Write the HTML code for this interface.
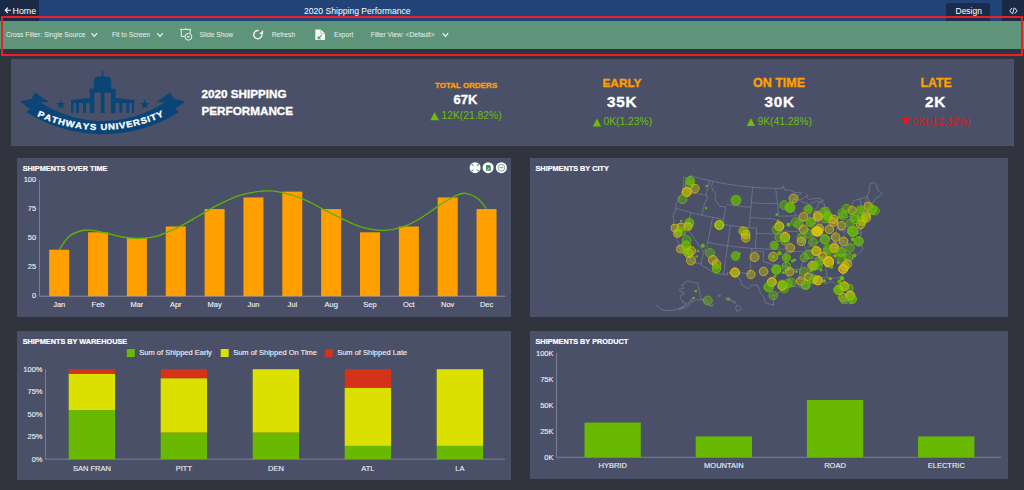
<!DOCTYPE html>
<html><head><meta charset="utf-8"><style>
*{margin:0;padding:0;box-sizing:border-box}
html,body{width:1024px;height:490px;overflow:hidden;background:#31333f;font-family:'Liberation Sans',sans-serif;}
.a{position:absolute;white-space:nowrap}
.panel{position:absolute;background:#4a5068}
.tb{position:absolute;top:30px;font-size:6.7px;color:#eef2ee;line-height:10px}
.ttl{position:absolute;font-size:7.3px;font-weight:bold;color:#fff;line-height:8px;-webkit-text-stroke:0.2px #fff}
svg text{font-family:'Liberation Sans',sans-serif;}
.ax{font-size:7.5px;fill:#eef0f4;stroke:#eef0f4;stroke-width:0.12px}
.hb{-webkit-text-stroke:0.35px currentColor}
</style></head><body>
<!-- top bar -->
<div class="a" style="left:0;top:0;width:1024px;height:21px;background:#214377"></div>
<div class="a" style="left:0;top:0;width:39px;height:21px;background:#1a2946"></div>
<div class="a" style="left:12.5px;top:4.7px;font-size:8.9px;color:#fff;line-height:12px">Home</div>
<svg class="a" style="left:0;top:0" width="14" height="20"><path d="M5.2,10.3 H10.9 M7.9,7.6 L5.3,10.3 L7.9,13" fill="none" stroke="#fff" stroke-width="1.1"/></svg>
<div class="a" style="left:304px;top:4.5px;font-size:8.6px;color:#fff;line-height:12px">2020 Shipping Performance</div>
<div class="a" style="left:946px;top:3px;width:44px;height:18px;border-radius:3px 3px 0 0;background:#1b2b4a"></div>
<div class="a" style="left:955.5px;top:4.7px;font-size:8.5px;color:#fff;line-height:12px">Design</div>
<div class="a" style="left:1002px;top:0;width:22px;height:21px;background:#1a2946"></div>
<svg class="a" style="left:1000px;top:0" width="24" height="20"><path d="M12,8 L9.8,10.8 L12,13.6 M14.8,8 L17,10.8 L14.8,13.6 M14.2,7.6 L12.6,14" fill="none" stroke="#fff" stroke-width="0.9"/></svg>
<!-- toolbar -->
<div class="a" style="left:0;top:21px;width:1024px;height:28px;background:#5e9479"></div>
<div class="tb" style="left:6px">Cross Filter: Single Source</div>
<div class="tb" style="left:112px">Fit to Screen</div>
<div class="tb" style="left:199.5px">Slide Show</div>
<div class="tb" style="left:271.7px">Refresh</div>
<div class="tb" style="left:334px">Export</div>
<div class="tb" style="left:370.8px">Filter View: &lt;Default&gt;</div>
<svg class="a" style="left:0;top:0" width="1024" height="60">
<g fill="none" stroke="#f4f6f4" stroke-width="1.2">
<path d="M91.5,33.2 L94.3,36.4 L97.1,33.2"/>
<path d="M157.2,33.2 L160,36.4 L162.8,33.2"/>
<path d="M442.6,33.2 L445.4,36.4 L448.2,33.2"/>
</g>
<g fill="none" stroke="#f4f6f4" stroke-width="1.1">
<path d="M179.9,29.4 H190.9 M181.3,29.4 V36.4 H184.9 M190.1,29.4 V33.3 M185.6,28.2 V29.4" stroke-width="0.95"/>
<circle cx="188.4" cy="36.8" r="3.4" stroke-width="0.95"/>
<path d="M187.5,35.4 L189.9,36.8 L187.5,38.2 Z" fill="#f4f6f4" stroke="none"/>
<path d="M261.9,34.2 A4.1,4.1 0 1 1 258.6,30.6" stroke-width="1.4"/>
</g>
<path d="M263.1,29.9 L263.1,34.0 L259.1,34.0 Z" fill="#f4f6f4"/>
<path d="M315.3,29.4 H320.8 L325,33.6 V40.1 H315.3 Z" fill="#f4f6f4"/>
<path d="M318.2,38.6 L321.6,35.2 M318.2,36.2 V38.6 H320.6" stroke="#5e9479" stroke-width="1.1" fill="none"/>
<path d="M320.8,29.4 V33.6 H325" stroke="#5e9479" stroke-width="0.4" fill="none"/>
</svg>
<!-- highlight box -->
<div class="a" style="left:0.7px;top:15.6px;width:1022.3px;height:40px;border:2px solid #e8202a"></div>

<!-- header panel -->
<div class="panel" style="left:11px;top:59px;width:1003px;height:87px"></div>
<!-- chart panels -->
<div class="panel" style="left:17px;top:158px;width:494px;height:159px"></div>
<div class="panel" style="left:530px;top:158px;width:478px;height:159px"></div>
<div class="panel" style="left:17px;top:331px;width:494px;height:149px"></div>
<div class="panel" style="left:530px;top:331px;width:478px;height:148px"></div>

<div class="ttl" style="left:22.7px;top:165px">SHIPMENTS OVER TIME</div>
<div class="ttl" style="left:535.5px;top:165px">SHIPMENTS BY CITY</div>
<div class="ttl" style="left:22.7px;top:338px">SHIPMENTS BY WAREHOUSE</div>
<div class="ttl" style="left:535.5px;top:338px">SHIPMENTS BY PRODUCT</div>

<!-- header text -->
<div class="a hb" style="left:201.5px;top:86.3px;font-size:11.7px;font-weight:bold;color:#fff;line-height:16.25px">2020 SHIPPING<br>PERFORMANCE</div>
<div class="a hb" style="left:435px;top:81px;font-size:8px;font-weight:bold;color:#ff9f00;line-height:10px">TOTAL ORDERS</div>
<div class="a hb" style="left:453.5px;top:92px;font-size:13px;font-weight:bold;color:#fff;line-height:15px">67K</div>
<div class="a" style="left:441.5px;top:110px;font-size:10.3px;color:#6cc000;line-height:12px">12K(21.82%)</div>
<div class="a hb" style="left:602.5px;top:75.5px;font-size:11.8px;font-weight:bold;color:#ff9f00;line-height:14px">EARLY</div>
<div class="a hb" style="left:607px;top:92.9px;font-size:15.3px;font-weight:bold;color:#fff;line-height:18px;letter-spacing:0.7px">35K</div>
<div class="a" style="left:603.5px;top:115.5px;font-size:10.3px;color:#6cc000;line-height:12px">0K(1.23%)</div>
<div class="a hb" style="left:753px;top:75.5px;font-size:12.5px;font-weight:bold;color:#ff9f00;line-height:14px">ON TIME</div>
<div class="a hb" style="left:764.5px;top:92.9px;font-size:15.3px;font-weight:bold;color:#fff;line-height:18px;letter-spacing:0.7px">30K</div>
<div class="a" style="left:757.5px;top:115.5px;font-size:10.3px;color:#6cc000;line-height:12px">9K(41.28%)</div>
<div class="a hb" style="left:920.5px;top:75.5px;font-size:12.3px;font-weight:bold;color:#ff9f00;line-height:14px">LATE</div>
<div class="a hb" style="left:925px;top:92.9px;font-size:15.3px;font-weight:bold;color:#fff;line-height:18px;letter-spacing:0.7px">2K</div>
<div class="a" style="left:912.5px;top:115.8px;font-size:10.3px;color:#dc1a1e;line-height:12px">0K(-12.32%)</div>

<svg class="a" style="left:0;top:0" width="1024" height="490">
<g fill="#6cc000">
<path d="M430.3,120.3 L434.6,112.2 L439,120.3 Z"/>
<path d="M592.8,126.5 L597,118.6 L601.2,126.5 Z"/>
<path d="M746.7,125.9 L750.9,118 L755,125.9 Z"/>
</g>
<path d="M901.7,117.8 L910,117.8 L905.9,125.8 Z" fill="#f0121a"/>
<path d="M40.6,102.6 A114.35,114.35 0 0 0 164.70,102.6 L179.00,111.9 A141.85,141.85 0 0 1 26.3,111.9 Z" fill="#0a4577"/>
<path d="M40.60,102.60 L49.10,101.90 L43.00,98.20 L35.20,92.30 L31.60,98.70 L19.90,101.60 L29.90,108.70 L26.30,111.90 L33.00,108.00 Z" fill="#0a4577"/>
<path d="M164.70,102.60 L156.20,101.90 L162.30,98.20 L170.10,92.30 L173.70,98.70 L185.40,101.60 L175.40,108.70 L179.00,111.90 L172.30,108.00 Z" fill="#0a4577"/>
<g fill="#0a4577"><rect x="102" y="70.9" width="1.3" height="7" /><path d="M93.9,89.3 V81.6 Q93.9,76.6 98.9,76.6 H106.3 Q111.3,76.6 111.3,81.6 V89.3 Z"/><rect x="89.8" y="88.9" width="25.7" height="3.8"/><rect x="89.8" y="88.9" width="4.60" height="24.20"/><rect x="100.8" y="88.9" width="3.70" height="24.20"/><rect x="110.9" y="88.9" width="4.60" height="24.20"/><path d="M71.10,100.00 L89.80,97.90 L89.80,102.90 L71.10,102.90 Z"/><rect x="71.10" y="100.5" width="2.20" height="12.3"/><rect x="76.10" y="100.5" width="2.90" height="12.3"/><rect x="83.00" y="100.5" width="3.00" height="12.3"/><path d="M134.20,100.00 L115.50,97.90 L115.50,102.90 L134.20,102.90 Z"/><rect x="132.00" y="100.5" width="2.20" height="12.3"/><rect x="126.30" y="100.5" width="2.90" height="12.3"/><rect x="119.30" y="100.5" width="3.00" height="12.3"/></g>
<path d="M60.70,99.70 L61.93,102.90 L65.36,103.09 L62.70,105.25 L63.58,108.56 L60.70,106.70 L57.82,108.56 L58.70,105.25 L56.04,103.09 L59.47,102.90 Z" fill="#0a4577"/>
<path d="M144.60,99.70 L145.83,102.90 L149.26,103.09 L146.60,105.25 L147.48,108.56 L144.60,106.70 L141.72,108.56 L142.60,105.25 L139.94,103.09 L143.37,102.90 Z" fill="#0a4577"/>
<g font-size="8.6" font-weight="bold" fill="#fff" stroke="#fff" stroke-width="0.3"><text transform="translate(39.99,117.27) rotate(23.77) scale(1.12,1)" text-anchor="middle">P</text><text transform="translate(46.96,120.14) rotate(20.89) scale(1.12,1)" text-anchor="middle">A</text><text transform="translate(53.81,122.57) rotate(18.12) scale(1.12,1)" text-anchor="middle">T</text><text transform="translate(60.77,124.66) rotate(15.34) scale(1.12,1)" text-anchor="middle">H</text><text transform="translate(69.39,126.75) rotate(11.95) scale(1.12,1)" text-anchor="middle">W</text><text transform="translate(78.12,128.33) rotate(8.56) scale(1.12,1)" text-anchor="middle">A</text><text transform="translate(85.61,129.26) rotate(5.68) scale(1.12,1)" text-anchor="middle">Y</text><text transform="translate(92.86,129.81) rotate(2.90) scale(1.12,1)" text-anchor="middle">S</text><text transform="translate(103.92,129.96) rotate(-1.33) scale(1.12,1)" text-anchor="middle">U</text><text transform="translate(111.72,129.58) rotate(-4.31) scale(1.12,1)" text-anchor="middle">N</text><text transform="translate(117.36,129.04) rotate(-6.47) scale(1.12,1)" text-anchor="middle">I</text><text transform="translate(122.71,128.34) rotate(-8.53) scale(1.12,1)" text-anchor="middle">V</text><text transform="translate(129.88,127.09) rotate(-11.31) scale(1.12,1)" text-anchor="middle">E</text><text transform="translate(137.23,125.42) rotate(-14.19) scale(1.12,1)" text-anchor="middle">R</text><text transform="translate(144.49,123.39) rotate(-17.07) scale(1.12,1)" text-anchor="middle">S</text><text transform="translate(149.62,121.71) rotate(-19.14) scale(1.12,1)" text-anchor="middle">I</text><text transform="translate(154.44,119.95) rotate(-21.10) scale(1.12,1)" text-anchor="middle">T</text><text transform="translate(160.91,117.27) rotate(-23.77) scale(1.12,1)" text-anchor="middle">Y</text></g>
<text x="36.2" y="298.0" text-anchor="end" class="ax">0</text>
<line x1="37.8" y1="296.2" x2="39.5" y2="296.2" stroke="#858ca3" stroke-width="0.5" stroke-opacity="0.6"/>
<text x="36.2" y="269.1" text-anchor="end" class="ax">25</text>
<line x1="37.8" y1="267.1" x2="39.5" y2="267.1" stroke="#858ca3" stroke-width="0.5" stroke-opacity="0.6"/>
<text x="36.2" y="240.2" text-anchor="end" class="ax">50</text>
<line x1="37.8" y1="238.1" x2="39.5" y2="238.1" stroke="#858ca3" stroke-width="0.5" stroke-opacity="0.6"/>
<text x="36.2" y="211.3" text-anchor="end" class="ax">75</text>
<line x1="37.8" y1="209.1" x2="39.5" y2="209.1" stroke="#858ca3" stroke-width="0.5" stroke-opacity="0.6"/>
<text x="36.2" y="182.4" text-anchor="end" class="ax">100</text>
<line x1="37.8" y1="180.0" x2="39.5" y2="180.0" stroke="#858ca3" stroke-width="0.5" stroke-opacity="0.6"/>
<line x1="39.5" y1="180.0" x2="39.5" y2="296.2" stroke="#858ca3" stroke-width="0.8"/>
<line x1="39.5" y1="296.2" x2="505.5" y2="296.2" stroke="#858ca3" stroke-width="1"/>
<rect x="49.20" y="249.72" width="20" height="46.48" fill="#ff9f00"/>
<text x="59.20" y="306.8" text-anchor="middle" class="ax">Jan</text>
<rect x="88.05" y="232.29" width="20" height="63.91" fill="#ff9f00"/>
<text x="98.05" y="306.8" text-anchor="middle" class="ax">Feb</text>
<rect x="126.90" y="238.10" width="20" height="58.10" fill="#ff9f00"/>
<text x="136.90" y="306.8" text-anchor="middle" class="ax">Mar</text>
<rect x="165.75" y="226.48" width="20" height="69.72" fill="#ff9f00"/>
<text x="175.75" y="306.8" text-anchor="middle" class="ax">Apr</text>
<rect x="204.60" y="209.05" width="20" height="87.15" fill="#ff9f00"/>
<text x="214.60" y="306.8" text-anchor="middle" class="ax">May</text>
<rect x="243.45" y="197.43" width="20" height="98.77" fill="#ff9f00"/>
<text x="253.45" y="306.8" text-anchor="middle" class="ax">Jun</text>
<rect x="282.30" y="191.62" width="20" height="104.58" fill="#ff9f00"/>
<text x="292.30" y="306.8" text-anchor="middle" class="ax">Jul</text>
<rect x="321.15" y="209.05" width="20" height="87.15" fill="#ff9f00"/>
<text x="331.15" y="306.8" text-anchor="middle" class="ax">Aug</text>
<rect x="360.00" y="232.29" width="20" height="63.91" fill="#ff9f00"/>
<text x="370.00" y="306.8" text-anchor="middle" class="ax">Sep</text>
<rect x="398.85" y="226.48" width="20" height="69.72" fill="#ff9f00"/>
<text x="408.85" y="306.8" text-anchor="middle" class="ax">Oct</text>
<rect x="437.70" y="197.43" width="20" height="98.77" fill="#ff9f00"/>
<text x="447.70" y="306.8" text-anchor="middle" class="ax">Nov</text>
<rect x="476.55" y="209.05" width="20" height="87.15" fill="#ff9f00"/>
<text x="486.55" y="306.8" text-anchor="middle" class="ax">Dec</text>
<path d="M59.2,249.4 C61.1,247.1 65.9,238.6 70.5,235.4 C75.1,232.2 81.1,230.4 86.9,230.0 C92.8,229.6 99.8,231.8 105.6,233.0 C111.4,234.2 116.5,236.1 122.0,237.0 C127.5,237.9 132.5,238.6 138.4,238.4 C144.3,238.2 150.5,238.0 157.2,236.1 C163.8,234.2 171.3,230.6 178.3,227.2 C185.3,223.8 192.4,219.4 199.4,215.5 C206.4,211.6 213.5,207.1 220.5,203.7 C227.5,200.2 234.1,196.9 241.5,194.8 C248.9,192.7 258.6,191.3 265.0,190.9 C271.4,190.5 273.8,190.9 280.0,192.2 C286.2,193.5 295.0,195.8 302.2,198.7 C309.4,201.5 316.7,206.0 323.3,209.3 C329.9,212.6 335.8,215.8 342.0,218.7 C348.2,221.6 354.0,224.9 360.8,226.9 C367.6,228.9 376.0,230.4 383.0,230.4 C390.0,230.4 396.6,229.1 403.0,226.9 C409.4,224.8 415.4,221.2 421.7,217.5 C427.9,213.8 434.6,208.3 440.5,204.6 C446.4,200.9 452.6,197.1 456.9,195.2 C461.2,193.3 462.7,192.8 466.2,193.4 C469.7,194.0 474.7,196.2 478.0,198.7 C481.3,201.2 484.8,206.9 486.2,208.6" fill="none" stroke="#62b300" stroke-width="1.3"/>
<text x="42.5" y="461.8" text-anchor="end" class="ax">0%</text>
<text x="42.5" y="439.3" text-anchor="end" class="ax">25%</text>
<text x="42.5" y="416.8" text-anchor="end" class="ax">50%</text>
<text x="42.5" y="394.3" text-anchor="end" class="ax">75%</text>
<text x="42.5" y="371.8" text-anchor="end" class="ax">100%</text>
<line x1="45.5" y1="369.2" x2="45.5" y2="459.2" stroke="#858ca3" stroke-width="0.8"/>
<line x1="45.5" y1="459.2" x2="505" y2="459.2" stroke="#858ca3" stroke-width="0.8"/>
<rect x="68.70" y="410.06" width="46.4" height="49.14" fill="#68b900"/>
<rect x="68.70" y="373.70" width="46.4" height="36.36" fill="#dce000"/>
<rect x="68.70" y="369.20" width="46.4" height="4.50" fill="#d5321a"/>
<text x="91.90" y="470.6" text-anchor="middle" class="ax">SAN FRAN</text>
<rect x="160.70" y="432.56" width="46.4" height="26.64" fill="#68b900"/>
<rect x="160.70" y="378.20" width="46.4" height="54.36" fill="#dce000"/>
<rect x="160.70" y="369.20" width="46.4" height="9.00" fill="#d5321a"/>
<text x="183.90" y="470.6" text-anchor="middle" class="ax">PITT</text>
<rect x="252.70" y="432.56" width="46.4" height="26.64" fill="#68b900"/>
<rect x="252.70" y="369.20" width="46.4" height="63.36" fill="#dce000"/>
<text x="275.90" y="470.6" text-anchor="middle" class="ax">DEN</text>
<rect x="344.70" y="445.88" width="46.4" height="13.32" fill="#68b900"/>
<rect x="344.70" y="387.74" width="46.4" height="58.14" fill="#dce000"/>
<rect x="344.70" y="369.20" width="46.4" height="18.54" fill="#d5321a"/>
<text x="367.90" y="470.6" text-anchor="middle" class="ax">ATL</text>
<rect x="436.70" y="445.88" width="46.4" height="13.32" fill="#68b900"/>
<rect x="436.70" y="369.20" width="46.4" height="76.68" fill="#dce000"/>
<text x="459.90" y="470.6" text-anchor="middle" class="ax">LA</text>
<rect x="126.8" y="349" width="8" height="8" fill="#68b900"/>
<text x="139.3" y="355.0" class="ax">Sum of Shipped Early</text>
<rect x="220.7" y="349" width="8" height="8" fill="#dce000"/>
<text x="233.2" y="355.0" class="ax">Sum of Shipped On Time</text>
<rect x="324.7" y="349" width="8" height="8" fill="#d5321a"/>
<text x="337.2" y="355.0" class="ax">Sum of Shipped Late</text>
<text x="553.5" y="459.9" text-anchor="end" class="ax">0K</text>
<text x="553.5" y="433.8" text-anchor="end" class="ax">25K</text>
<text x="553.5" y="407.8" text-anchor="end" class="ax">50K</text>
<text x="553.5" y="381.7" text-anchor="end" class="ax">75K</text>
<text x="553.5" y="355.6" text-anchor="end" class="ax">100K</text>
<line x1="556.5" y1="353.0" x2="556.5" y2="457.3" stroke="#858ca3" stroke-width="0.8"/>
<line x1="556.5" y1="457.3" x2="1001.3" y2="457.3" stroke="#858ca3" stroke-width="0.8"/>
<rect x="584.50" y="422.57" width="56.3" height="34.73" fill="#68b900"/>
<text x="612.65" y="468.2" text-anchor="middle" class="ax">HYBRID</text>
<rect x="695.70" y="436.44" width="56.3" height="20.86" fill="#68b900"/>
<text x="723.85" y="468.2" text-anchor="middle" class="ax">MOUNTAIN</text>
<rect x="806.90" y="399.94" width="56.3" height="57.37" fill="#68b900"/>
<text x="835.05" y="468.2" text-anchor="middle" class="ax">ROAD</text>
<rect x="918.10" y="436.44" width="56.3" height="20.86" fill="#68b900"/>
<text x="946.25" y="468.2" text-anchor="middle" class="ax">ELECTRIC</text>
<g>
<circle cx="475.1" cy="167.7" r="5.5" fill="#fff"/>
<circle cx="488.1" cy="167.7" r="5.5" fill="#fff"/>
<circle cx="501.4" cy="167.7" r="5.5" fill="#fff"/>
<g stroke="#4e8d6e" stroke-width="0.9" fill="none">
<path d="M473.5,166.1 L471.9,164.5 M476.7,166.1 L478.3,164.5 M473.5,169.3 L471.9,170.9 M476.7,169.3 L478.3,170.9"/>
</g>
<g fill="#4e8d6e">
<path d="M471.6,164.2 h1.8 l-1.8,1.8 Z M478.6,164.2 h-1.8 l1.8,1.8 Z M471.6,171.2 h1.8 l-1.8,-1.8 Z M478.6,171.2 h-1.8 l1.8,-1.8 Z"/>
<path d="M486,165 H489.6 L490.9,166.3 V170.8 H486 Z"/>
</g>
<path d="M487.5,169.8 L489.4,167.9" stroke="#fff" stroke-width="0.8"/>
<circle cx="501.4" cy="167.7" r="3.4" fill="none" stroke="#4e8d6e" stroke-width="0.7"/>
<path d="M499.4,167.7 H503.4" stroke="#4e8d6e" stroke-width="0.8"/>
</g>
<path d="M683.7,176.8L686.0,178.0L688.3,179.2L690.0,178.1L690.1,175.6L692.4,176.2L694.7,176.9L697.0,177.5L699.3,178.1L701.7,178.7L704.0,179.3L706.3,179.8L708.7,180.4L711.0,180.9L713.4,181.4L715.7,181.9L718.1,182.4L720.4,182.8L722.8,183.3L725.1,183.7L727.5,184.1L729.9,184.5L732.3,184.8L734.6,185.2L737.0,185.5L739.4,185.8L741.8,186.1L744.2,186.4L746.5,186.6L748.9,186.9L751.3,187.1L753.7,187.3L756.1,187.5L758.5,187.7L760.9,187.8L763.3,187.9L765.7,188.1L768.1,188.2L770.5,188.2L772.9,188.3L775.3,188.3L777.7,188.4L780.1,188.4L782.5,188.3L782.5,186.4L783.7,186.8L784.4,189.8L787.1,190.0L789.8,190.2L792.4,191.4L795.0,192.5L798.2,192.7L801.5,192.9L799.2,194.9L796.9,196.9L793.2,199.6L796.0,199.8L798.8,199.9L803.3,198.6L805.9,196.3L807.8,194.7L806.7,197.3L809.3,199.6L811.9,199.1L814.5,198.6L816.9,198.6L819.4,198.5L821.3,199.8L823.5,200.6L819.5,202.1L817.8,205.9L817.9,207.4L814.9,209.2L814.3,213.9L816.0,219.8L814.1,223.1L811.5,224.4L810.1,220.9L809.8,217.4L810.4,211.7L811.8,207.0L809.5,205.7L811.4,203.0L813.8,202.2L816.5,200.9L818.6,201.2L819.5,202.1L820.9,202.4L824.4,204.0L824.7,206.5L825.5,210.0L823.5,211.3L825.1,212.1L827.0,210.3L829.0,213.6L829.5,215.1L829.5,217.2L827.5,219.0L827.1,222.1L830.3,223.2L833.2,222.3L837.4,219.6L838.7,218.3L842.3,215.6L842.3,213.5L841.6,211.6L844.1,211.1L846.7,210.6L850.4,208.8L851.0,206.1L853.3,201.5L855.1,200.0L857.9,199.4L860.7,198.7L863.5,198.0L866.3,197.3L867.2,195.4L868.1,194.7L869.2,191.8L869.1,187.6L870.7,183.2L874.2,182.7L875.9,183.5L877.9,190.3L881.7,192.8L882.0,193.8L879.2,196.8L876.4,197.6L873.8,201.5L872.5,202.4L871.6,205.9L871.9,208.4L871.5,210.1L874.0,212.0L875.5,210.3L876.2,212.2L874.0,213.4L871.9,214.2L867.5,216.7L863.7,218.9L862.7,221.2L863.4,224.2L861.2,230.2L858.3,228.0L860.6,231.2L861.2,233.6L859.8,238.2L859.1,240.9L861.6,244.6L862.9,249.0L859.6,252.8L857.1,255.1L854.6,257.5L850.6,261.3L847.2,266.1L843.5,269.8L842.8,276.5L843.8,280.5L845.9,284.0L848.1,287.5L850.1,291.5L852.2,295.5L852.5,300.0L851.6,303.2L848.5,304.2L845.1,300.7L842.5,297.0L839.9,293.3L838.8,288.4L833.4,282.0L830.7,281.8L826.1,283.9L821.0,280.9L817.7,281.2L814.5,281.5L811.4,282.0L808.4,282.4L807.6,284.0L809.7,287.9L804.0,288.8L800.6,287.7L797.2,286.6L793.3,286.5L789.3,286.4L784.9,288.5L781.2,291.0L777.4,293.5L774.2,297.0L773.7,301.1L773.2,305.1L774.4,305.3L769.9,304.1L765.5,302.9L763.9,297.3L760.4,293.1L759.1,289.3L757.7,285.4L754.6,285.2L751.6,285.0L748.2,288.8L745.2,287.1L742.3,285.3L740.6,280.1L737.7,276.7L734.8,273.3L731.2,272.9L727.5,272.5L727.2,274.8L724.1,274.4L721.1,274.0L718.0,273.5L714.9,273.1L711.9,271.4L709.0,269.7L706.1,267.9L703.2,266.2L700.4,264.4L701.0,263.5L697.6,263.1L694.2,262.7L690.8,262.2L690.7,259.2L687.3,255.3L686.8,253.6L682.9,250.5L679.1,248.5L679.5,245.4L676.3,238.7L677.1,235.7L675.8,231.7L674.4,229.1L673.3,223.5L674.1,219.4L672.7,215.8L675.5,210.8L675.9,208.2L676.0,204.0L679.5,198.7L680.7,195.2L681.9,191.7L683.1,188.2L683.5,184.6L683.6,180.7L683.7,176.8ZM682.8,187.8L686.3,189.6L688.9,191.6L691.5,193.5L694.1,193.6L696.8,193.8L699.4,193.9L703.0,194.7L706.6,195.4M709.5,180.6L708.5,184.8L707.6,189.0L706.6,193.3L706.6,195.4M706.6,195.4L707.5,198.2L704.4,203.7L703.6,207.5L702.7,211.3L701.9,215.1M675.9,208.2L678.5,209.0L681.1,209.8L683.7,210.6L686.4,211.3L689.0,212.0L691.6,212.7L694.3,213.3L696.9,214.0L699.6,214.6L702.2,215.2L704.9,215.8L707.6,216.4L710.2,216.9L712.9,217.4L715.6,217.9L718.3,218.4L721.0,218.9L723.7,219.3M691.0,212.5L690.0,216.2L689.1,219.9L688.1,223.6L687.1,227.3L689.3,230.9L691.6,234.5L693.9,238.0L696.3,241.5L698.7,245.1L701.2,248.6L703.7,252.1M703.7,252.1L702.8,255.9L701.9,259.7L701.0,263.5M703.7,252.1L707.0,246.5L707.7,242.8L708.4,239.2L709.1,235.6L709.8,231.9L710.5,228.3L711.2,224.6L711.9,221.0L712.6,217.4M707.8,242.5L710.7,243.0L713.5,243.5L716.3,244.0L719.2,244.5L722.0,244.9L724.9,245.3L727.7,245.7L730.6,246.1L733.5,246.5L736.3,246.8L739.2,247.1L742.1,247.4L744.9,247.7L747.8,248.0L750.7,248.2L753.5,248.4L756.4,248.6L759.3,248.8L762.2,248.9L765.1,249.0L768.0,249.1L770.8,249.2L773.7,249.2L776.6,249.3L779.5,249.3L782.4,249.3L785.3,249.3M730.4,225.5L729.8,229.2L729.3,233.0L728.8,236.8L728.3,240.5L727.8,244.3L727.2,248.1L726.7,251.8L726.2,255.6L725.7,259.3L725.2,263.1L724.6,266.9L724.1,270.6L723.6,274.4M722.9,224.4L726.6,224.9L730.4,225.5M722.9,224.4L723.4,220.8L724.0,217.3L724.6,213.8L725.1,210.3L725.7,206.8M725.7,206.8L722.5,206.5L719.4,206.2L717.5,202.8L714.5,199.1L716.2,194.3L712.8,190.0L711.6,186.7L712.7,181.3M726.1,204.3L728.6,204.6L731.0,205.0L733.5,205.4L736.0,205.7L738.5,206.0L741.0,206.3L743.4,206.6L745.9,206.8L748.4,207.1L750.9,207.3M730.4,225.5L733.0,225.8L735.6,226.2L738.3,226.5L740.9,226.8L743.5,227.0L746.2,227.3L748.8,227.5L751.5,227.8L754.1,228.0L756.7,228.1M749.2,227.6L749.5,223.9L749.8,220.2L750.1,216.5L750.4,212.8L750.8,209.1L751.1,205.5L751.4,201.8L751.7,198.1L752.0,194.5L752.3,190.8L752.6,187.2M751.3,202.5L753.9,202.8L756.6,203.0L759.2,203.1L761.8,203.3L764.5,203.4L767.1,203.5L769.8,203.6L772.4,203.7L775.0,203.7L777.7,203.7M777.7,203.7L776.9,198.4L776.2,193.4L775.6,188.3M777.7,203.7L778.0,207.0L778.0,211.5L778.0,216.1M750.0,217.4L753.0,217.6L755.9,217.9L758.8,218.0L761.7,218.2L764.6,218.3L767.5,218.5L770.4,218.5L775.2,219.4L778.0,221.2M756.7,228.1L756.4,233.2M756.4,233.2L759.3,233.4L762.2,233.5L765.1,233.7L767.9,233.8L770.8,233.9L773.7,233.9L776.6,234.0L779.5,234.0L782.3,234.0M756.4,233.2L756.2,237.0L755.9,240.9L755.7,244.7L755.4,248.5M751.6,248.3L751.4,251.9L751.1,255.5L750.8,259.2L750.6,262.8L750.3,266.4L750.0,270.1L749.8,273.7L746.7,273.5L743.6,273.2L740.6,272.9L737.5,272.6L734.5,272.3M751.5,250.8L754.5,251.0L757.5,251.2L760.5,251.4L763.5,251.5L763.3,256.5L763.1,261.4L767.2,262.7L771.3,264.0L775.5,264.8L779.6,265.6L782.8,266.1L785.9,266.6M785.3,249.3L785.2,245.7L785.1,242.1L785.1,238.5L783.5,235.0L782.3,234.0M782.3,234.0L780.0,227.3L778.0,221.2M778.0,216.1L780.7,216.1L783.5,216.1L786.2,216.1L789.0,216.0L791.7,215.9L794.4,215.8L797.2,215.7M780.4,230.9L783.2,231.1L786.0,231.2L788.8,231.3L791.6,231.4L794.4,231.5L797.2,231.5M797.2,215.7L793.7,211.3L791.1,208.3L792.7,203.2L792.5,199.7M797.2,215.7L799.7,220.6L801.4,224.1L798.3,229.4L797.2,231.5L799.7,235.5L802.3,239.4L804.0,243.9L805.6,248.4L805.2,253.6L803.9,258.8L802.1,264.0L800.3,269.2L799.5,274.3L798.7,279.4M799.7,220.6L803.1,220.4L806.6,220.2L810.0,219.9M809.6,206.7L807.9,203.3L805.2,202.7L802.5,202.2L799.2,200.1M811.5,223.6L811.9,228.2L812.3,232.9L812.7,237.6L811.5,241.3L810.9,243.9M811.5,223.6L814.5,223.3L817.4,223.1L820.4,222.8L823.4,222.5L826.4,222.2M821.6,222.8L822.1,227.2L822.6,231.6L823.1,236.0M807.2,248.3L811.0,245.4L813.2,243.2L816.1,242.7L819.1,242.1L820.8,239.4L823.1,236.0L827.7,238.0L832.1,238.4L834.7,234.4L836.4,230.3L838.1,226.2M838.4,226.1L837.2,219.1M785.3,251.8L788.3,251.8L791.3,251.7L794.4,251.6L797.4,251.4L800.4,251.3L803.4,251.1L803.6,253.7L805.2,253.6M805.8,251.0L808.7,250.7L811.5,250.4L814.4,250.1L817.2,249.8L820.0,249.5L822.9,249.1L825.7,248.7L828.5,248.3L831.3,247.9L834.2,247.5L837.0,247.0M785.3,251.8L785.4,255.5L785.6,259.2L785.8,262.9L785.9,266.6M785.9,266.6L787.8,266.8L787.9,269.6M787.9,269.6L791.0,269.6L794.1,269.5L797.2,269.3L800.3,269.2M787.9,269.6L788.0,274.7L788.1,279.8L789.7,284.8L789.3,286.4M798.7,279.4L802.8,279.2L806.9,279.0L807.6,283.0M803.1,258.8L806.1,258.6L809.2,258.4L812.3,258.1L815.4,257.9L818.4,257.6L821.5,257.3L824.6,256.9L827.6,256.6M811.7,258.2L812.0,262.3L812.3,266.3L812.7,270.4L813.0,274.4L813.3,278.5L812.7,281.6M822.3,257.2L823.6,261.3L824.9,265.4L826.2,269.6L826.7,273.3L827.1,277.1M815.9,278.3L819.7,277.9L823.4,277.5L827.1,277.1L827.7,278.6L831.6,278.3L835.5,277.9L839.4,277.6L840.1,276.4L842.4,276.6M815.9,278.3L816.7,281.8M827.6,256.6L832.2,253.4L836.2,250.2L837.0,247.0M832.5,255.9L835.5,255.3L838.4,254.7L841.4,254.1L842.0,255.5L846.5,254.8L852.3,258.7M827.6,256.6L832.5,255.9L836.9,260.4L839.9,264.9L843.0,269.3M837.0,247.0L839.9,246.6L842.8,246.2L845.6,245.7L848.5,245.2L851.4,244.7L854.3,244.2L857.1,243.6L860.0,243.1M829.0,248.1L833.0,247.6L837.0,247.0M829.0,248.1L832.1,245.4L835.1,242.6L832.3,239.4M835.1,242.6L839.2,243.1L841.8,241.6L844.0,236.0L847.6,231.7L849.8,230.8M843.0,229.9L843.5,232.5L847.3,229.7L849.8,230.8L853.3,232.2L857.3,236.1M839.1,230.5L842.1,230.0L845.1,229.5L848.1,229.0L851.0,228.4L854.0,227.8L857.0,227.1M839.1,230.5L838.3,225.9M840.0,218.6L842.7,218.1L845.3,217.6L848.0,217.1L850.7,216.6L853.3,216.0L856.0,215.5L858.0,217.6L859.3,218.1L862.3,219.3M859.3,218.1L859.3,225.2L858.2,227.5M857.0,227.1L858.3,233.5L861.2,232.9M859.8,198.9L861.7,205.8L862.9,209.9L862.8,213.6L863.5,218.9M866.3,197.3L864.5,205.1L865.8,209.3M862.9,209.9L866.4,209.1L869.9,208.2L871.5,207.1M862.8,213.6L865.9,212.9L869.0,212.2L870.6,211.9M869.0,212.2L869.8,215.8M870.6,211.9L872.2,214.1M867.2,195.4L868.7,200.0L870.2,204.6L871.6,205.9M740.8,309.7L736.5,311.2L735.7,307.7L736.7,304.9L740.3,306.9L741.7,308.6L740.8,309.7ZM735.9,302.9L733.8,303.1L732.6,301.6L734.5,301.4L735.9,302.9ZM732.4,300.1L729.8,300.6L732.4,300.1ZM728.1,299.6L726.0,299.6L725.2,298.3L726.7,297.6L728.1,299.6ZM720.3,296.1L718.2,296.3L718.9,294.8L720.3,295.0L720.3,296.1ZM697.7,283.0L700.9,299.1L702.7,299.3L704.5,300.7L705.8,298.8L710.6,306.3L713.2,304.4L712.2,306.3L707.9,304.3L705.8,302.2L702.3,299.5L698.8,300.0L696.6,299.4L694.9,300.5L692.8,301.9L691.5,302.1L692.2,299.4L691.0,300.4L689.7,302.5L689.6,305.2L687.2,306.4L685.2,307.7L682.1,308.5L678.9,309.7L680.5,309.0L683.8,306.7L686.3,304.2L685.5,302.7L682.7,302.9L682.5,300.7L680.5,299.1L680.0,297.2L681.2,294.8L684.1,294.2L683.5,292.4L680.6,291.8L679.4,289.7L682.2,288.6L683.3,288.8L684.1,288.0L682.9,286.4L681.4,285.1L683.8,284.4L685.4,282.0L688.2,280.8L690.8,281.7L693.3,282.4L695.8,282.6L697.7,283.0ZM689.5,302.5 L684,306 L678,308.8 L670,310.8 L662,309.8 L655.5,304.5" fill="none" stroke="#8890a8" stroke-width="0.5" stroke-linejoin="round"/>
<circle cx="690.2" cy="181.0" r="4.3" fill="#6cc000" fill-opacity="0.4" stroke="#6cc000" stroke-opacity="0.85" stroke-width="0.8"/>
<circle cx="690.2" cy="181.0" r="4.3" fill="#6cc000" fill-opacity="0.4" stroke="#6cc000" stroke-opacity="0.85" stroke-width="0.8"/>
<circle cx="689.5" cy="184.5" r="4.3" fill="#6cc000" fill-opacity="0.4" stroke="#6cc000" stroke-opacity="0.85" stroke-width="0.8"/>
<circle cx="695" cy="188.5" r="4.2" fill="#d2c800" fill-opacity="0.4" stroke="#f2c000" stroke-opacity="0.85" stroke-width="0.8"/>
<circle cx="686.8" cy="192" r="4.5" fill="#d2c800" fill-opacity="0.4" stroke="#f2c000" stroke-opacity="0.85" stroke-width="0.8"/>
<circle cx="686.8" cy="192" r="4.5" fill="#d2c800" fill-opacity="0.4" stroke="#f2c000" stroke-opacity="0.85" stroke-width="0.8"/>
<circle cx="682.5" cy="199.2" r="4.5" fill="#6cc000" fill-opacity="0.4" stroke="#6cc000" stroke-opacity="0.85" stroke-width="0.8"/>
<circle cx="736" cy="200.3" r="5.2" fill="#6cc000" fill-opacity="0.4" stroke="#6cc000" stroke-opacity="0.85" stroke-width="0.8"/>
<circle cx="736" cy="200.3" r="4" fill="#6cc000" fill-opacity="0.4" stroke="#6cc000" stroke-opacity="0.85" stroke-width="0.8"/>
<circle cx="675" cy="228" r="4" fill="#d2c800" fill-opacity="0.4" stroke="#f2c000" stroke-opacity="0.85" stroke-width="0.8"/>
<circle cx="681" cy="227" r="4" fill="#d2c800" fill-opacity="0.4" stroke="#f2c000" stroke-opacity="0.85" stroke-width="0.8"/>
<circle cx="689" cy="224" r="4.5" fill="#6cc000" fill-opacity="0.4" stroke="#6cc000" stroke-opacity="0.85" stroke-width="0.8"/>
<circle cx="689.5" cy="222.5" r="4.3" fill="#6cc000" fill-opacity="0.4" stroke="#6cc000" stroke-opacity="0.85" stroke-width="0.8"/>
<circle cx="688" cy="226.5" r="4" fill="#d2c800" fill-opacity="0.4" stroke="#f2c000" stroke-opacity="0.85" stroke-width="0.8"/>
<circle cx="678.5" cy="232" r="4" fill="#6cc000" fill-opacity="0.4" stroke="#6cc000" stroke-opacity="0.85" stroke-width="0.8"/>
<circle cx="677.5" cy="233.5" r="4" fill="#d2c800" fill-opacity="0.4" stroke="#f2c000" stroke-opacity="0.85" stroke-width="0.8"/>
<circle cx="682" cy="231.5" r="4" fill="#6cc000" fill-opacity="0.4" stroke="#6cc000" stroke-opacity="0.85" stroke-width="0.8"/>
<circle cx="686.5" cy="240" r="4.5" fill="#6cc000" fill-opacity="0.4" stroke="#6cc000" stroke-opacity="0.85" stroke-width="0.8"/>
<circle cx="686" cy="245.5" r="4.5" fill="#6cc000" fill-opacity="0.4" stroke="#6cc000" stroke-opacity="0.85" stroke-width="0.8"/>
<circle cx="686" cy="245.5" r="4.5" fill="#6cc000" fill-opacity="0.4" stroke="#6cc000" stroke-opacity="0.85" stroke-width="0.8"/>
<circle cx="680.5" cy="249" r="4" fill="#d2c800" fill-opacity="0.4" stroke="#f2c000" stroke-opacity="0.85" stroke-width="0.8"/>
<circle cx="685" cy="250" r="4" fill="#6cc000" fill-opacity="0.4" stroke="#6cc000" stroke-opacity="0.85" stroke-width="0.8"/>
<circle cx="691" cy="251" r="4.5" fill="#d2c800" fill-opacity="0.4" stroke="#f2c000" stroke-opacity="0.85" stroke-width="0.8"/>
<circle cx="688.5" cy="253" r="4.5" fill="#d2c800" fill-opacity="0.4" stroke="#f2c000" stroke-opacity="0.85" stroke-width="0.8"/>
<circle cx="688" cy="252" r="4.5" fill="#6cc000" fill-opacity="0.4" stroke="#6cc000" stroke-opacity="0.85" stroke-width="0.8"/>
<circle cx="691" cy="260.5" r="4.5" fill="#d2c800" fill-opacity="0.4" stroke="#f2c000" stroke-opacity="0.85" stroke-width="0.8"/>
<circle cx="719.3" cy="225" r="4.5" fill="#6cc000" fill-opacity="0.4" stroke="#6cc000" stroke-opacity="0.85" stroke-width="0.8"/>
<circle cx="719.3" cy="225" r="4.5" fill="#6cc000" fill-opacity="0.4" stroke="#6cc000" stroke-opacity="0.85" stroke-width="0.8"/>
<circle cx="719.3" cy="225" r="4.5" fill="#d2c800" fill-opacity="0.4" stroke="#f2c000" stroke-opacity="0.85" stroke-width="0.8"/>
<circle cx="743.2" cy="231.1" r="4.3" fill="#d2c800" fill-opacity="0.4" stroke="#f2c000" stroke-opacity="0.85" stroke-width="0.8"/>
<circle cx="745" cy="232.1" r="4.4" fill="#6cc000" fill-opacity="0.4" stroke="#6cc000" stroke-opacity="0.85" stroke-width="0.8"/>
<circle cx="745.7" cy="234.6" r="4.3" fill="#d2c800" fill-opacity="0.4" stroke="#f2c000" stroke-opacity="0.85" stroke-width="0.8"/>
<circle cx="745.7" cy="237.9" r="4.3" fill="#d2c800" fill-opacity="0.4" stroke="#f2c000" stroke-opacity="0.85" stroke-width="0.8"/>
<circle cx="710" cy="253" r="4.5" fill="#6cc000" fill-opacity="0.4" stroke="#6cc000" stroke-opacity="0.85" stroke-width="0.8"/>
<circle cx="713" cy="260" r="4.5" fill="#d2c800" fill-opacity="0.4" stroke="#f2c000" stroke-opacity="0.85" stroke-width="0.8"/>
<circle cx="716.5" cy="264" r="4.3" fill="#d2c800" fill-opacity="0.4" stroke="#f2c000" stroke-opacity="0.85" stroke-width="0.8"/>
<circle cx="735.5" cy="256" r="4.5" fill="#6cc000" fill-opacity="0.4" stroke="#6cc000" stroke-opacity="0.85" stroke-width="0.8"/>
<circle cx="735.5" cy="256" r="3.2" fill="#6cc000" fill-opacity="0.4" stroke="#6cc000" stroke-opacity="0.85" stroke-width="0.8"/>
<circle cx="754.5" cy="257.1" r="4.5" fill="#d2c800" fill-opacity="0.4" stroke="#f2c000" stroke-opacity="0.85" stroke-width="0.8"/>
<circle cx="716.5" cy="268.5" r="4.2" fill="#6cc000" fill-opacity="0.4" stroke="#6cc000" stroke-opacity="0.85" stroke-width="0.8"/>
<circle cx="716.5" cy="268.5" r="4.2" fill="#6cc000" fill-opacity="0.4" stroke="#6cc000" stroke-opacity="0.85" stroke-width="0.8"/>
<circle cx="735" cy="272.5" r="4.5" fill="#d2c800" fill-opacity="0.4" stroke="#f2c000" stroke-opacity="0.85" stroke-width="0.8"/>
<circle cx="735" cy="272.5" r="4.5" fill="#d2c800" fill-opacity="0.4" stroke="#f2c000" stroke-opacity="0.85" stroke-width="0.8"/>
<circle cx="751" cy="274.5" r="4.2" fill="#d2c800" fill-opacity="0.4" stroke="#f2c000" stroke-opacity="0.85" stroke-width="0.8"/>
<circle cx="707.8" cy="300.5" r="4.5" fill="#6cc000" fill-opacity="0.4" stroke="#6cc000" stroke-opacity="0.85" stroke-width="0.8"/>
<circle cx="793.5" cy="198.5" r="4.5" fill="#d2c800" fill-opacity="0.4" stroke="#f2c000" stroke-opacity="0.85" stroke-width="0.8"/>
<circle cx="784.3" cy="205.1" r="4.5" fill="#6cc000" fill-opacity="0.4" stroke="#6cc000" stroke-opacity="0.85" stroke-width="0.8"/>
<circle cx="790" cy="207.5" r="4.8" fill="#6cc000" fill-opacity="0.4" stroke="#6cc000" stroke-opacity="0.85" stroke-width="0.8"/>
<circle cx="790" cy="207.5" r="4.8" fill="#6cc000" fill-opacity="0.4" stroke="#6cc000" stroke-opacity="0.85" stroke-width="0.8"/>
<circle cx="790" cy="207.5" r="4.8" fill="#6cc000" fill-opacity="0.4" stroke="#6cc000" stroke-opacity="0.85" stroke-width="0.8"/>
<circle cx="779.3" cy="226.4" r="4.5" fill="#d2c800" fill-opacity="0.4" stroke="#f2c000" stroke-opacity="0.85" stroke-width="0.8"/>
<circle cx="779.3" cy="226.4" r="4.5" fill="#d2c800" fill-opacity="0.4" stroke="#f2c000" stroke-opacity="0.85" stroke-width="0.8"/>
<circle cx="776.4" cy="229.3" r="4.4" fill="#6cc000" fill-opacity="0.4" stroke="#6cc000" stroke-opacity="0.85" stroke-width="0.8"/>
<circle cx="785" cy="237.1" r="4.6" fill="#d2c800" fill-opacity="0.4" stroke="#f2c000" stroke-opacity="0.85" stroke-width="0.8"/>
<circle cx="785" cy="237.1" r="4.6" fill="#d2c800" fill-opacity="0.4" stroke="#f2c000" stroke-opacity="0.85" stroke-width="0.8"/>
<circle cx="779.3" cy="237.1" r="4.4" fill="#6cc000" fill-opacity="0.4" stroke="#6cc000" stroke-opacity="0.85" stroke-width="0.8"/>
<circle cx="795.7" cy="222.1" r="4.4" fill="#6cc000" fill-opacity="0.4" stroke="#6cc000" stroke-opacity="0.85" stroke-width="0.8"/>
<circle cx="798.6" cy="224.3" r="4.4" fill="#6cc000" fill-opacity="0.4" stroke="#6cc000" stroke-opacity="0.85" stroke-width="0.8"/>
<circle cx="803.6" cy="216.8" r="4.4" fill="#d2c800" fill-opacity="0.4" stroke="#f2c000" stroke-opacity="0.85" stroke-width="0.8"/>
<circle cx="808.2" cy="209.3" r="4.4" fill="#6cc000" fill-opacity="0.4" stroke="#6cc000" stroke-opacity="0.85" stroke-width="0.8"/>
<circle cx="808.2" cy="209.3" r="3" fill="#6cc000" fill-opacity="0.4" stroke="#6cc000" stroke-opacity="0.85" stroke-width="0.8"/>
<circle cx="810.7" cy="222.1" r="4.4" fill="#6cc000" fill-opacity="0.4" stroke="#6cc000" stroke-opacity="0.85" stroke-width="0.8"/>
<circle cx="810.7" cy="222.1" r="4.4" fill="#6cc000" fill-opacity="0.4" stroke="#6cc000" stroke-opacity="0.85" stroke-width="0.8"/>
<circle cx="803.6" cy="229.3" r="4.4" fill="#d2c800" fill-opacity="0.4" stroke="#f2c000" stroke-opacity="0.85" stroke-width="0.8"/>
<circle cx="807.9" cy="233.6" r="4.4" fill="#6cc000" fill-opacity="0.4" stroke="#6cc000" stroke-opacity="0.85" stroke-width="0.8"/>
<circle cx="817.5" cy="215.5" r="4.4" fill="#d2c800" fill-opacity="0.4" stroke="#f2c000" stroke-opacity="0.85" stroke-width="0.8"/>
<circle cx="816.4" cy="231.4" r="4.6" fill="#d2c800" fill-opacity="0.4" stroke="#f2c000" stroke-opacity="0.85" stroke-width="0.8"/>
<circle cx="816.4" cy="231.4" r="4.6" fill="#d2c800" fill-opacity="0.4" stroke="#f2c000" stroke-opacity="0.85" stroke-width="0.8"/>
<circle cx="819.3" cy="228.6" r="4.4" fill="#d2c800" fill-opacity="0.4" stroke="#f2c000" stroke-opacity="0.85" stroke-width="0.8"/>
<circle cx="801.4" cy="237.9" r="4.4" fill="#6cc000" fill-opacity="0.4" stroke="#6cc000" stroke-opacity="0.85" stroke-width="0.8"/>
<circle cx="823.6" cy="212.1" r="4.4" fill="#6cc000" fill-opacity="0.4" stroke="#6cc000" stroke-opacity="0.85" stroke-width="0.8"/>
<circle cx="827.5" cy="216" r="4.4" fill="#6cc000" fill-opacity="0.4" stroke="#6cc000" stroke-opacity="0.85" stroke-width="0.8"/>
<circle cx="827.5" cy="216" r="4.4" fill="#6cc000" fill-opacity="0.4" stroke="#6cc000" stroke-opacity="0.85" stroke-width="0.8"/>
<circle cx="868.2" cy="206.4" r="4.3" fill="#d2c800" fill-opacity="0.4" stroke="#f2c000" stroke-opacity="0.85" stroke-width="0.8"/>
<circle cx="872.1" cy="209.6" r="4.6" fill="#6cc000" fill-opacity="0.4" stroke="#6cc000" stroke-opacity="0.85" stroke-width="0.8"/>
<circle cx="872.1" cy="209.6" r="4.6" fill="#6cc000" fill-opacity="0.4" stroke="#6cc000" stroke-opacity="0.85" stroke-width="0.8"/>
<circle cx="875" cy="210.7" r="4.3" fill="#6cc000" fill-opacity="0.4" stroke="#6cc000" stroke-opacity="0.85" stroke-width="0.8"/>
<circle cx="865.7" cy="215.7" r="4.3" fill="#d2c800" fill-opacity="0.4" stroke="#f2c000" stroke-opacity="0.85" stroke-width="0.8"/>
<circle cx="861.4" cy="217.1" r="4.4" fill="#6cc000" fill-opacity="0.4" stroke="#6cc000" stroke-opacity="0.85" stroke-width="0.8"/>
<circle cx="860.4" cy="209.6" r="4" fill="#6cc000" fill-opacity="0.4" stroke="#6cc000" stroke-opacity="0.85" stroke-width="0.8"/>
<circle cx="860.4" cy="209.6" r="2.5" fill="#6cc000" fill-opacity="0.4" stroke="#6cc000" stroke-opacity="0.85" stroke-width="0.8"/>
<circle cx="852.1" cy="210.4" r="4.2" fill="#d2c800" fill-opacity="0.4" stroke="#f2c000" stroke-opacity="0.85" stroke-width="0.8"/>
<circle cx="842.1" cy="213.2" r="4.3" fill="#6cc000" fill-opacity="0.4" stroke="#6cc000" stroke-opacity="0.85" stroke-width="0.8"/>
<circle cx="846.4" cy="208.6" r="4.3" fill="#6cc000" fill-opacity="0.4" stroke="#6cc000" stroke-opacity="0.85" stroke-width="0.8"/>
<circle cx="854.3" cy="216.4" r="4.3" fill="#6cc000" fill-opacity="0.4" stroke="#6cc000" stroke-opacity="0.85" stroke-width="0.8"/>
<circle cx="827.9" cy="216.4" r="4.3" fill="#6cc000" fill-opacity="0.4" stroke="#6cc000" stroke-opacity="0.85" stroke-width="0.8"/>
<circle cx="825.7" cy="211.4" r="4.3" fill="#6cc000" fill-opacity="0.4" stroke="#6cc000" stroke-opacity="0.85" stroke-width="0.8"/>
<circle cx="833.6" cy="219.3" r="4.3" fill="#d2c800" fill-opacity="0.4" stroke="#f2c000" stroke-opacity="0.85" stroke-width="0.8"/>
<circle cx="852.9" cy="231.4" r="5" fill="#6cc000" fill-opacity="0.4" stroke="#6cc000" stroke-opacity="0.85" stroke-width="0.8"/>
<circle cx="852.9" cy="231.4" r="5" fill="#6cc000" fill-opacity="0.4" stroke="#6cc000" stroke-opacity="0.85" stroke-width="0.8"/>
<circle cx="852.9" cy="231.4" r="5" fill="#6cc000" fill-opacity="0.4" stroke="#6cc000" stroke-opacity="0.85" stroke-width="0.8"/>
<circle cx="858.6" cy="241.4" r="4.6" fill="#6cc000" fill-opacity="0.4" stroke="#6cc000" stroke-opacity="0.85" stroke-width="0.8"/>
<circle cx="858.6" cy="241.4" r="4.6" fill="#6cc000" fill-opacity="0.4" stroke="#6cc000" stroke-opacity="0.85" stroke-width="0.8"/>
<circle cx="841.4" cy="225.7" r="4.3" fill="#d2c800" fill-opacity="0.4" stroke="#f2c000" stroke-opacity="0.85" stroke-width="0.8"/>
<circle cx="833.2" cy="222.1" r="4.3" fill="#d2c800" fill-opacity="0.4" stroke="#f2c000" stroke-opacity="0.85" stroke-width="0.8"/>
<circle cx="829.3" cy="229.3" r="4.3" fill="#d2c800" fill-opacity="0.4" stroke="#f2c000" stroke-opacity="0.85" stroke-width="0.8"/>
<circle cx="825.7" cy="218.6" r="4.3" fill="#6cc000" fill-opacity="0.4" stroke="#6cc000" stroke-opacity="0.85" stroke-width="0.8"/>
<circle cx="817.9" cy="231.4" r="4.6" fill="#d2c800" fill-opacity="0.4" stroke="#f2c000" stroke-opacity="0.85" stroke-width="0.8"/>
<circle cx="817.9" cy="231.4" r="4.6" fill="#d2c800" fill-opacity="0.4" stroke="#f2c000" stroke-opacity="0.85" stroke-width="0.8"/>
<circle cx="817.9" cy="231.4" r="4.6" fill="#d2c800" fill-opacity="0.4" stroke="#f2c000" stroke-opacity="0.85" stroke-width="0.8"/>
<circle cx="825" cy="239.3" r="4.6" fill="#6cc000" fill-opacity="0.4" stroke="#6cc000" stroke-opacity="0.85" stroke-width="0.8"/>
<circle cx="825" cy="239.3" r="4.6" fill="#6cc000" fill-opacity="0.4" stroke="#6cc000" stroke-opacity="0.85" stroke-width="0.8"/>
<circle cx="835.7" cy="237.1" r="4.3" fill="#d2c800" fill-opacity="0.4" stroke="#f2c000" stroke-opacity="0.85" stroke-width="0.8"/>
<circle cx="843.6" cy="241.4" r="4.3" fill="#d2c800" fill-opacity="0.4" stroke="#f2c000" stroke-opacity="0.85" stroke-width="0.8"/>
<circle cx="850" cy="247.9" r="4.3" fill="#6cc000" fill-opacity="0.4" stroke="#6cc000" stroke-opacity="0.85" stroke-width="0.8"/>
<circle cx="834.3" cy="247.1" r="4.3" fill="#d2c800" fill-opacity="0.4" stroke="#f2c000" stroke-opacity="0.85" stroke-width="0.8"/>
<circle cx="827.9" cy="248.6" r="4.3" fill="#6cc000" fill-opacity="0.4" stroke="#6cc000" stroke-opacity="0.85" stroke-width="0.8"/>
<circle cx="862.1" cy="220.7" r="4.6" fill="#6cc000" fill-opacity="0.4" stroke="#6cc000" stroke-opacity="0.85" stroke-width="0.8"/>
<circle cx="862.1" cy="220.7" r="4.6" fill="#6cc000" fill-opacity="0.4" stroke="#6cc000" stroke-opacity="0.85" stroke-width="0.8"/>
<circle cx="860.7" cy="224.3" r="4.3" fill="#d2c800" fill-opacity="0.4" stroke="#f2c000" stroke-opacity="0.85" stroke-width="0.8"/>
<circle cx="866.4" cy="217.9" r="4.3" fill="#d2c800" fill-opacity="0.4" stroke="#f2c000" stroke-opacity="0.85" stroke-width="0.8"/>
<circle cx="855" cy="219.3" r="4.3" fill="#6cc000" fill-opacity="0.4" stroke="#6cc000" stroke-opacity="0.85" stroke-width="0.8"/>
<circle cx="850" cy="223.6" r="4.3" fill="#6cc000" fill-opacity="0.4" stroke="#6cc000" stroke-opacity="0.85" stroke-width="0.8"/>
<circle cx="817.9" cy="217.1" r="4.3" fill="#d2c800" fill-opacity="0.4" stroke="#f2c000" stroke-opacity="0.85" stroke-width="0.8"/>
<circle cx="843.2" cy="215.7" r="4.3" fill="#6cc000" fill-opacity="0.4" stroke="#6cc000" stroke-opacity="0.85" stroke-width="0.8"/>
<circle cx="774.3" cy="245.4" r="4.3" fill="#6cc000" fill-opacity="0.4" stroke="#6cc000" stroke-opacity="0.85" stroke-width="0.8"/>
<circle cx="774.3" cy="245.4" r="3" fill="#6cc000" fill-opacity="0.4" stroke="#6cc000" stroke-opacity="0.85" stroke-width="0.8"/>
<circle cx="790.4" cy="247.9" r="4.3" fill="#d2c800" fill-opacity="0.4" stroke="#f2c000" stroke-opacity="0.85" stroke-width="0.8"/>
<circle cx="773.2" cy="256.8" r="4.5" fill="#d2c800" fill-opacity="0.4" stroke="#f2c000" stroke-opacity="0.85" stroke-width="0.8"/>
<circle cx="786.4" cy="257.5" r="4.3" fill="#6cc000" fill-opacity="0.4" stroke="#6cc000" stroke-opacity="0.85" stroke-width="0.8"/>
<circle cx="786.4" cy="257.5" r="3" fill="#6cc000" fill-opacity="0.4" stroke="#6cc000" stroke-opacity="0.85" stroke-width="0.8"/>
<circle cx="776.4" cy="269.6" r="4.5" fill="#6cc000" fill-opacity="0.4" stroke="#6cc000" stroke-opacity="0.85" stroke-width="0.8"/>
<circle cx="776.4" cy="269.6" r="4.5" fill="#6cc000" fill-opacity="0.4" stroke="#6cc000" stroke-opacity="0.85" stroke-width="0.8"/>
<circle cx="776.4" cy="269.6" r="4.5" fill="#6cc000" fill-opacity="0.4" stroke="#6cc000" stroke-opacity="0.85" stroke-width="0.8"/>
<circle cx="786.4" cy="266.4" r="4.3" fill="#6cc000" fill-opacity="0.4" stroke="#6cc000" stroke-opacity="0.85" stroke-width="0.8"/>
<circle cx="789.6" cy="271.8" r="4.3" fill="#d2c800" fill-opacity="0.4" stroke="#f2c000" stroke-opacity="0.85" stroke-width="0.8"/>
<circle cx="763.6" cy="271.5" r="4.3" fill="#d2c800" fill-opacity="0.4" stroke="#f2c000" stroke-opacity="0.85" stroke-width="0.8"/>
<circle cx="804.3" cy="257.5" r="4.3" fill="#6cc000" fill-opacity="0.4" stroke="#6cc000" stroke-opacity="0.85" stroke-width="0.8"/>
<circle cx="808.9" cy="254.3" r="4.3" fill="#6cc000" fill-opacity="0.4" stroke="#6cc000" stroke-opacity="0.85" stroke-width="0.8"/>
<circle cx="816.4" cy="251.1" r="4.5" fill="#d2c800" fill-opacity="0.4" stroke="#f2c000" stroke-opacity="0.85" stroke-width="0.8"/>
<circle cx="816.4" cy="251.1" r="4.5" fill="#d2c800" fill-opacity="0.4" stroke="#f2c000" stroke-opacity="0.85" stroke-width="0.8"/>
<circle cx="814.3" cy="265.7" r="4.5" fill="#6cc000" fill-opacity="0.4" stroke="#6cc000" stroke-opacity="0.85" stroke-width="0.8"/>
<circle cx="814.3" cy="265.7" r="4.5" fill="#6cc000" fill-opacity="0.4" stroke="#6cc000" stroke-opacity="0.85" stroke-width="0.8"/>
<circle cx="812.1" cy="265.7" r="4.3" fill="#d2c800" fill-opacity="0.4" stroke="#f2c000" stroke-opacity="0.85" stroke-width="0.8"/>
<circle cx="803.9" cy="271.6" r="4.4" fill="#6cc000" fill-opacity="0.4" stroke="#6cc000" stroke-opacity="0.85" stroke-width="0.8"/>
<circle cx="812.9" cy="242.1" r="4.3" fill="#6cc000" fill-opacity="0.4" stroke="#6cc000" stroke-opacity="0.85" stroke-width="0.8"/>
<circle cx="801.4" cy="241.4" r="4.3" fill="#d2c800" fill-opacity="0.4" stroke="#f2c000" stroke-opacity="0.85" stroke-width="0.8"/>
<circle cx="785" cy="241" r="4.3" fill="#6cc000" fill-opacity="0.4" stroke="#6cc000" stroke-opacity="0.85" stroke-width="0.8"/>
<circle cx="819.3" cy="260.7" r="4.3" fill="#6cc000" fill-opacity="0.4" stroke="#6cc000" stroke-opacity="0.85" stroke-width="0.8"/>
<circle cx="828.6" cy="261.8" r="5" fill="#d2c800" fill-opacity="0.4" stroke="#f2c000" stroke-opacity="0.85" stroke-width="0.8"/>
<circle cx="828.6" cy="261.8" r="5" fill="#d2c800" fill-opacity="0.4" stroke="#f2c000" stroke-opacity="0.85" stroke-width="0.8"/>
<circle cx="828.6" cy="261.8" r="5" fill="#d2c800" fill-opacity="0.4" stroke="#f2c000" stroke-opacity="0.85" stroke-width="0.8"/>
<circle cx="834.3" cy="248.6" r="4.3" fill="#d2c800" fill-opacity="0.4" stroke="#f2c000" stroke-opacity="0.85" stroke-width="0.8"/>
<circle cx="827.9" cy="250.7" r="4.4" fill="#6cc000" fill-opacity="0.4" stroke="#6cc000" stroke-opacity="0.85" stroke-width="0.8"/>
<circle cx="841.4" cy="252.1" r="4.4" fill="#6cc000" fill-opacity="0.4" stroke="#6cc000" stroke-opacity="0.85" stroke-width="0.8"/>
<circle cx="841.4" cy="252.1" r="4.4" fill="#6cc000" fill-opacity="0.4" stroke="#6cc000" stroke-opacity="0.85" stroke-width="0.8"/>
<circle cx="842.1" cy="258.9" r="4.4" fill="#6cc000" fill-opacity="0.4" stroke="#6cc000" stroke-opacity="0.85" stroke-width="0.8"/>
<circle cx="848.6" cy="257.5" r="4.3" fill="#6cc000" fill-opacity="0.4" stroke="#6cc000" stroke-opacity="0.85" stroke-width="0.8"/>
<circle cx="847.5" cy="263.9" r="4.3" fill="#d2c800" fill-opacity="0.4" stroke="#f2c000" stroke-opacity="0.85" stroke-width="0.8"/>
<circle cx="843.2" cy="268.9" r="4.5" fill="#d2c800" fill-opacity="0.4" stroke="#f2c000" stroke-opacity="0.85" stroke-width="0.8"/>
<circle cx="843.2" cy="268.9" r="4.5" fill="#d2c800" fill-opacity="0.4" stroke="#f2c000" stroke-opacity="0.85" stroke-width="0.8"/>
<circle cx="845" cy="266.4" r="4.3" fill="#d2c800" fill-opacity="0.4" stroke="#f2c000" stroke-opacity="0.85" stroke-width="0.8"/>
<circle cx="822.9" cy="256.4" r="4.3" fill="#d2c800" fill-opacity="0.4" stroke="#f2c000" stroke-opacity="0.85" stroke-width="0.8"/>
<circle cx="817.9" cy="265" r="4.4" fill="#6cc000" fill-opacity="0.4" stroke="#6cc000" stroke-opacity="0.85" stroke-width="0.8"/>
<circle cx="771.8" cy="282.1" r="4.5" fill="#d2c800" fill-opacity="0.4" stroke="#f2c000" stroke-opacity="0.85" stroke-width="0.8"/>
<circle cx="771.8" cy="282.1" r="4.5" fill="#d2c800" fill-opacity="0.4" stroke="#f2c000" stroke-opacity="0.85" stroke-width="0.8"/>
<circle cx="768.6" cy="287.1" r="4.6" fill="#6cc000" fill-opacity="0.4" stroke="#6cc000" stroke-opacity="0.85" stroke-width="0.8"/>
<circle cx="768.6" cy="287.1" r="4.6" fill="#6cc000" fill-opacity="0.4" stroke="#6cc000" stroke-opacity="0.85" stroke-width="0.8"/>
<circle cx="773.2" cy="295.4" r="4.3" fill="#6cc000" fill-opacity="0.4" stroke="#6cc000" stroke-opacity="0.85" stroke-width="0.8"/>
<circle cx="782.5" cy="285.7" r="4.6" fill="#d2c800" fill-opacity="0.4" stroke="#f2c000" stroke-opacity="0.85" stroke-width="0.8"/>
<circle cx="782.5" cy="285.7" r="4.6" fill="#d2c800" fill-opacity="0.4" stroke="#f2c000" stroke-opacity="0.85" stroke-width="0.8"/>
<circle cx="782.1" cy="284.3" r="4.3" fill="#6cc000" fill-opacity="0.4" stroke="#6cc000" stroke-opacity="0.85" stroke-width="0.8"/>
<circle cx="784.3" cy="288.6" r="4.3" fill="#6cc000" fill-opacity="0.4" stroke="#6cc000" stroke-opacity="0.85" stroke-width="0.8"/>
<circle cx="791.4" cy="282.5" r="4.4" fill="#6cc000" fill-opacity="0.4" stroke="#6cc000" stroke-opacity="0.85" stroke-width="0.8"/>
<circle cx="787.9" cy="283.6" r="4.3" fill="#6cc000" fill-opacity="0.4" stroke="#6cc000" stroke-opacity="0.85" stroke-width="0.8"/>
<circle cx="800.7" cy="281.1" r="4.3" fill="#d2c800" fill-opacity="0.4" stroke="#f2c000" stroke-opacity="0.85" stroke-width="0.8"/>
<circle cx="805.7" cy="285" r="4.4" fill="#6cc000" fill-opacity="0.4" stroke="#6cc000" stroke-opacity="0.85" stroke-width="0.8"/>
<circle cx="805.7" cy="285" r="4.4" fill="#6cc000" fill-opacity="0.4" stroke="#6cc000" stroke-opacity="0.85" stroke-width="0.8"/>
<circle cx="808.2" cy="276.8" r="4" fill="#d2c800" fill-opacity="0.4" stroke="#f2c000" stroke-opacity="0.85" stroke-width="0.8"/>
<circle cx="813.6" cy="279.3" r="4.4" fill="#6cc000" fill-opacity="0.4" stroke="#6cc000" stroke-opacity="0.85" stroke-width="0.8"/>
<circle cx="813.6" cy="279.3" r="4.4" fill="#6cc000" fill-opacity="0.4" stroke="#6cc000" stroke-opacity="0.85" stroke-width="0.8"/>
<circle cx="817.9" cy="280.4" r="4.4" fill="#d2c800" fill-opacity="0.4" stroke="#f2c000" stroke-opacity="0.85" stroke-width="0.8"/>
<circle cx="817.9" cy="280.4" r="4.4" fill="#d2c800" fill-opacity="0.4" stroke="#f2c000" stroke-opacity="0.85" stroke-width="0.8"/>
<circle cx="838.6" cy="289.9" r="4.6" fill="#6cc000" fill-opacity="0.4" stroke="#6cc000" stroke-opacity="0.85" stroke-width="0.8"/>
<circle cx="838.6" cy="289.9" r="4.6" fill="#6cc000" fill-opacity="0.4" stroke="#6cc000" stroke-opacity="0.85" stroke-width="0.8"/>
<circle cx="838.6" cy="289.9" r="4.6" fill="#6cc000" fill-opacity="0.4" stroke="#6cc000" stroke-opacity="0.85" stroke-width="0.8"/>
<circle cx="844.3" cy="286.3" r="4.4" fill="#d2c800" fill-opacity="0.4" stroke="#f2c000" stroke-opacity="0.85" stroke-width="0.8"/>
<circle cx="844.3" cy="286.3" r="4.4" fill="#d2c800" fill-opacity="0.4" stroke="#f2c000" stroke-opacity="0.85" stroke-width="0.8"/>
<circle cx="849.3" cy="288.1" r="4" fill="#6cc000" fill-opacity="0.4" stroke="#6cc000" stroke-opacity="0.85" stroke-width="0.8"/>
<circle cx="841.4" cy="287" r="4.3" fill="#6cc000" fill-opacity="0.4" stroke="#6cc000" stroke-opacity="0.85" stroke-width="0.8"/>
<circle cx="842.9" cy="297.4" r="4.3" fill="#d2c800" fill-opacity="0.4" stroke="#f2c000" stroke-opacity="0.85" stroke-width="0.8"/>
<circle cx="850.4" cy="295.6" r="4.4" fill="#d2c800" fill-opacity="0.4" stroke="#f2c000" stroke-opacity="0.85" stroke-width="0.8"/>
<circle cx="850.4" cy="295.6" r="4.4" fill="#d2c800" fill-opacity="0.4" stroke="#f2c000" stroke-opacity="0.85" stroke-width="0.8"/>
<circle cx="852.1" cy="299.1" r="4.4" fill="#6cc000" fill-opacity="0.4" stroke="#6cc000" stroke-opacity="0.85" stroke-width="0.8"/>
<circle cx="852.1" cy="299.1" r="4.4" fill="#6cc000" fill-opacity="0.4" stroke="#6cc000" stroke-opacity="0.85" stroke-width="0.8"/>
<circle cx="844.3" cy="299.9" r="4" fill="#6cc000" fill-opacity="0.4" stroke="#6cc000" stroke-opacity="0.85" stroke-width="0.8"/>
<circle cx="706.7" cy="186" r="1.2" fill="#6cc000" fill-opacity="0.9"/>
<circle cx="706" cy="208" r="1.2" fill="#6cc000" fill-opacity="0.9"/>
<circle cx="681.2" cy="221" r="1.2" fill="#6cc000" fill-opacity="0.9"/>
<circle cx="698" cy="251" r="1.3" fill="#6cc000" fill-opacity="0.9"/>
<circle cx="696.5" cy="256.5" r="1.3" fill="#6cc000" fill-opacity="0.9"/>
<circle cx="702.8" cy="245.7" r="2" fill="#6cc000" fill-opacity="0.9"/>
<circle cx="735.5" cy="256" r="0.8" fill="#6cc000" fill-opacity="0.9"/>
<circle cx="739.5" cy="253.5" r="1.2" fill="#6cc000" fill-opacity="0.9"/>
<circle cx="735" cy="272.5" r="1" fill="#6cc000" fill-opacity="0.9"/>
<circle cx="695.8" cy="291.2" r="1.3" fill="#6cc000" fill-opacity="0.9"/>
<circle cx="693.5" cy="298" r="1.3" fill="#6cc000" fill-opacity="0.9"/>
<circle cx="728.5" cy="299" r="1.5" fill="#6cc000" fill-opacity="0.9"/>
<circle cx="776.7" cy="214.6" r="1.4" fill="#6cc000" fill-opacity="0.9"/>
<circle cx="778" cy="220.9" r="1.4" fill="#6cc000" fill-opacity="0.9"/>
<circle cx="788.6" cy="224.6" r="2.2" fill="#6cc000" fill-opacity="0.9"/>
<circle cx="808.2" cy="209.3" r="0.9" fill="#6cc000" fill-opacity="0.9"/>
<circle cx="860.4" cy="209.6" r="0.9" fill="#6cc000" fill-opacity="0.9"/>
<circle cx="838.2" cy="217.5" r="1.5" fill="#6cc000" fill-opacity="0.9"/>
<circle cx="852.9" cy="239.3" r="2" fill="#6cc000" fill-opacity="0.9"/>
<circle cx="843.6" cy="241.4" r="1" fill="#6cc000" fill-opacity="0.9"/>
<circle cx="774.3" cy="245.4" r="1" fill="#6cc000" fill-opacity="0.9"/>
<circle cx="773.2" cy="256.8" r="2" fill="#6cc000" fill-opacity="0.9"/>
<circle cx="779.6" cy="253.2" r="2.2" fill="#6cc000" fill-opacity="0.9"/>
<circle cx="786.4" cy="257.5" r="1" fill="#6cc000" fill-opacity="0.9"/>
<circle cx="792.5" cy="261.1" r="1.5" fill="#6cc000" fill-opacity="0.9"/>
<circle cx="794.6" cy="260" r="1.5" fill="#6cc000" fill-opacity="0.9"/>
<circle cx="783.2" cy="272.5" r="1.5" fill="#6cc000" fill-opacity="0.9"/>
<circle cx="796.3" cy="271.4" r="1.5" fill="#6cc000" fill-opacity="0.9"/>
<circle cx="810.7" cy="270.7" r="1.5" fill="#6cc000" fill-opacity="0.9"/>
<circle cx="821" cy="270" r="1.5" fill="#6cc000" fill-opacity="0.9"/>
<circle cx="831.4" cy="266.8" r="2" fill="#6cc000" fill-opacity="0.9"/>
<circle cx="835.4" cy="255.7" r="2" fill="#6cc000" fill-opacity="0.9"/>
<circle cx="854.3" cy="255.4" r="2" fill="#6cc000" fill-opacity="0.9"/>
<circle cx="838.2" cy="262.5" r="1.5" fill="#6cc000" fill-opacity="0.9"/>
<circle cx="830" cy="278.6" r="1.5" fill="#6cc000" fill-opacity="0.9"/>
<circle cx="842.1" cy="278.2" r="2" fill="#6cc000" fill-opacity="0.9"/>
<circle cx="773.2" cy="295.4" r="1" fill="#6cc000" fill-opacity="0.9"/>
<circle cx="775" cy="276.3" r="1.5" fill="#6cc000" fill-opacity="0.9"/>
<circle cx="824.3" cy="280.7" r="1.5" fill="#6cc000" fill-opacity="0.9"/>
<circle cx="841.8" cy="278.4" r="2" fill="#6cc000" fill-opacity="0.9"/>
<circle cx="839.3" cy="281.6" r="2" fill="#6cc000" fill-opacity="0.9"/>
<circle cx="830.4" cy="278.8" r="1.5" fill="#6cc000" fill-opacity="0.9"/>
<circle cx="824.6" cy="280.9" r="1.5" fill="#6cc000" fill-opacity="0.9"/>
</svg>
</body></html>
